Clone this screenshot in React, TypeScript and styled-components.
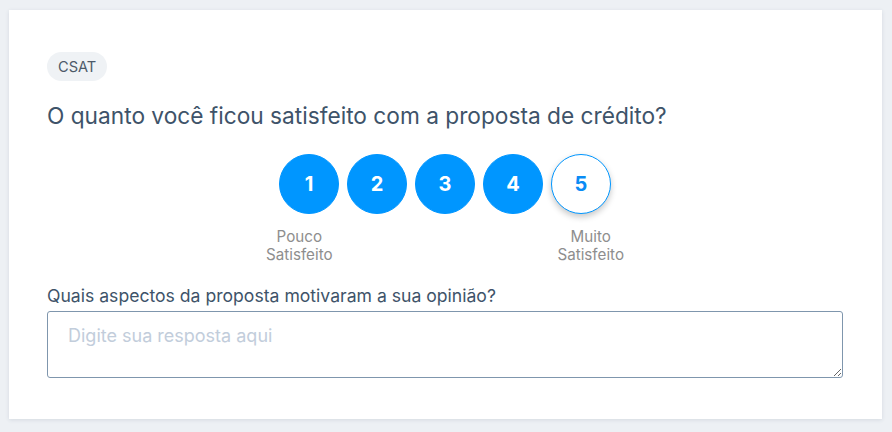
import React from "react";
import styled, { createGlobalStyle } from "styled-components";

const Global = createGlobalStyle`
  html, body { margin: 0; padding: 0; background: #edf0f4; }
  body { font-family: Inter, "Noto Sans", sans-serif; }
  * { box-sizing: border-box; }
`;

const Page = styled.div`
  padding: 10px 10px 13px 9px;
  width: 892px;
`;

const Card = styled.div`
  background: #ffffff;
  width: 873px;
  height: 409px;
  padding: 42px 39px 0 38px;
  box-shadow: 0 1px 4px rgba(40, 60, 90, 0.12);
  display: flex;
  flex-direction: column;
`;

const Pill = styled.span`
  align-self: flex-start;
  height: 29px;
  padding: 0 11px;
  border-radius: 15px;
  background: #eff2f5;
  color: #4d5a69;
  font-size: 14.6px;
  display: flex;
  align-items: center;
`;

const Question = styled.h2`
  margin: 21px 0 0;
  font-size: 22.7px;
  line-height: 28px;
  font-weight: 400;
  color: #3e5369;
`;

const Scale = styled.div`
  margin-top: 24px;
  display: flex;
  justify-content: center;
  gap: 8px;
`;

const Circle = styled.button<{ $selected?: boolean }>`
  width: 60px;
  height: 60px;
  border-radius: 50%;
  border: 1px solid #0096ff;
  background: ${(p) => (p.$selected ? "#ffffff" : "#0096ff")};
  color: ${(p) => (p.$selected ? "#0a8cf5" : "#ffffff")};
  font-family: Inter, sans-serif;
  font-size: 20px;
  font-weight: 700;
  padding: 0;
  display: flex;
  align-items: center;
  justify-content: center;
  box-shadow: ${(p) => (p.$selected ? "0 3px 6px rgba(0,0,0,0.22)" : "none")};
  cursor: pointer;
`;

const Labels = styled.div`
  margin: 14px auto 0;
  width: 358px;
  display: flex;
  justify-content: space-between;
`;

const Label = styled.span`
  font-size: 15.2px;
  line-height: 18px;
  color: #8e8e8e;
  text-align: center;
`;

const FieldLabel = styled.label`
  margin-top: 22px;
  font-size: 17.6px;
  line-height: 20px;
  color: #3e5369;
`;

const TextArea = styled.textarea`
  margin-top: 5px;
  width: 796px;
  height: 67px;
  border: 1px solid #7f96ad;
  border-radius: 3px;
  padding: 13px 20px;
  font-family: Inter, sans-serif;
  font-size: 18px;
  color: #3e5369;
  resize: vertical;
  outline: none;
  &::placeholder { color: #c2cddb; }
`;

export default function App() {
  const values = [1, 2, 3, 4, 5];
  return (
    <>
      <Global />
      <Page>
        <Card>
          <Pill>CSAT</Pill>
          <Question>O quanto você ficou satisfeito com a proposta de crédito?</Question>
          <Scale>
            {values.map((v) => (
              <Circle key={v} $selected={v === 5}>{v}</Circle>
            ))}
          </Scale>
          <Labels>
            <Label>Pouco<br />Satisfeito</Label>
            <Label>Muito<br />Satisfeito</Label>
          </Labels>
          <FieldLabel>Quais aspectos da proposta motivaram a sua opinião?</FieldLabel>
          <TextArea placeholder="Digite sua resposta aqui" />
        </Card>
      </Page>
    </>
  );
}
